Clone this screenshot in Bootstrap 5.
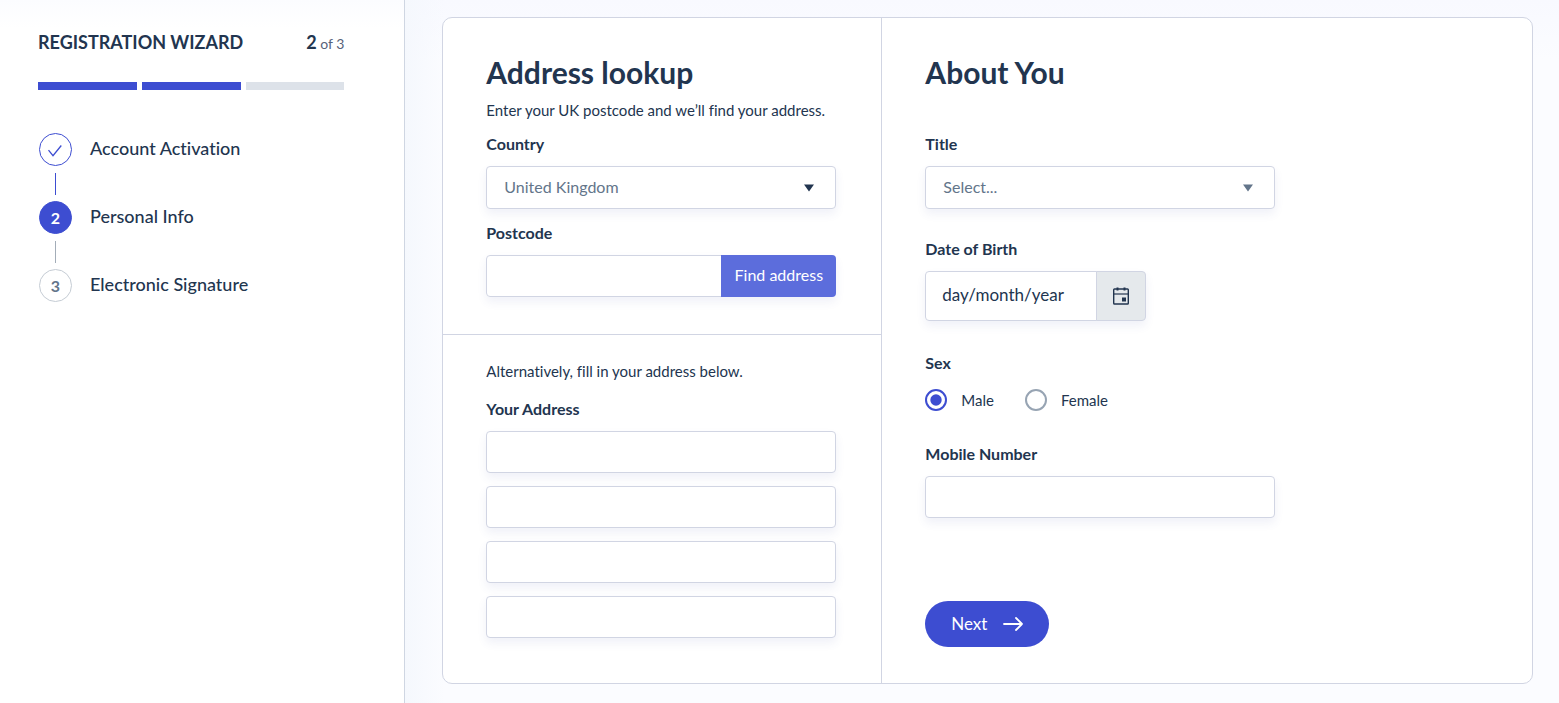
<!DOCTYPE html>
<html lang="en">
<head>
<meta charset="utf-8">
<meta name="viewport" content="width=device-width, initial-scale=1">
<title>Registration Wizard</title>
<link href="https://cdn.jsdelivr.net/npm/bootstrap@5.3.0/dist/css/bootstrap.min.css" rel="stylesheet">
<style>
:root { --ink: #22354f; --muted: #63758a; --brand: #3d4dd1; --line: #d1d5e3; --step-off: #c5ccd4; }
body { font-family: Lato, "Liberation Sans", sans-serif; font-size: 16px; line-height: 24px; color: var(--ink);
  font-variant-ligatures: none; background: #fbfcff; }
.wizard-side { flex: 0 0 26%; padding: 30px 60px 30px 38px; border-right: 1px solid #cfd6e2;
  background: linear-gradient(#fbfcff, #fff 28px); }
.wizard-main { padding: 17px 26px 20px 37px; background: linear-gradient(90deg, #f5f8fd, rgba(251,252,255,0) 40px), linear-gradient(#f8f9ff, #fbfcff 60px); }
.wizard-title { font-size: 18px; line-height: 24px; font-weight: 700; margin: 0; }
.step-count { font-size: 14px; color: #56637a; }
.step-count b { font-size: 18px; color: var(--ink); }
.step-bars { gap: 5px; margin-top: 28px; }
.step-bars span { height: 8px; background: #dde2e9; }
.step-bars .filled { background: var(--brand); }
.step-head, .step-count { height: 24px; }
.steps { margin: 43px 0 0 1px; font-size: 18px; font-weight: 500; }
.steps li { display: grid; grid-template-columns: 33px 1fr; column-gap: 18px; align-items: center; }
.steps a { color: inherit; text-decoration: none; padding-bottom: 4px; }
.step-dot { width: 33px; height: 33px; border: 1px solid var(--step-off); border-radius: 50%; font-size: 16px; font-weight: 700; color: var(--muted); }
.done .step-dot { border-color: var(--brand); color: var(--brand); }
.current .step-dot { border-color: var(--brand); background: var(--brand); color: #fff; }
.steps li + li::before { content: ""; grid-column: 1 / -1; width: 1px; height: 22px; margin: 7px 16px 6px; background: #a3adb8; }
.steps .done + li::before { background: var(--brand); }
.form-panel { border: 1px solid var(--line); border-radius: 10px; background: #fff; }
.address-side { border-right: 1px solid var(--line); }
.lookup { padding: 36px 45px 37px 43px; border-bottom: 1px solid var(--line); }
.manual { padding: 24px 45px 44px 43px; }
.about { padding: 36px 43px; }
.field-col { width: 350px; max-width: 100%; }
.intro { font-size: 15px; margin: 8px 0 10px; }
.manual .intro { margin: 0 0 14px; }
h2 { font-size: 30px; line-height: 36px; font-weight: 700; margin: 0; }
.form-label { font-size: 16px; line-height: 24px; font-weight: 700; margin: 0 0 10px; display: block; }
.postcode-field { margin-top: 12px; }
.about h2 { margin-bottom: 42px; }
.dob-field { margin-top: 28px; }
.sex-field, .mobile-field { margin-top: 30px; }
.address-lines { gap: 13px; }
.form-control, .form-select { height: 42px; border: 1px solid var(--line); border-radius: 4px; font-size: 16px; color: var(--ink);
  padding: 0 16px; box-shadow: 0 5px 10px rgba(60,75,160,.08); }
.form-select { height: 43px; color: var(--muted); padding: 0 40px 2px 17px;
  background-image: url("data:image/svg+xml,%3Csvg xmlns='http://www.w3.org/2000/svg' viewBox='0 0 10 8'%3E%3Cpath fill='%2363758a' d='M0 .5h10L5 7.5z'/%3E%3C/svg%3E");
  background-size: 10px 8px; background-position: right 21px center; }
.form-select.chosen { background-image: url("data:image/svg+xml,%3Csvg xmlns='http://www.w3.org/2000/svg' viewBox='0 0 10 8'%3E%3Cpath fill='%2322354f' d='M0 .5h10L5 7.5z'/%3E%3C/svg%3E"); }
.input-group { box-shadow: 0 5px 10px rgba(60,75,160,.08); border-radius: 4px; }
.input-group .form-control { box-shadow: none; }
.btn-find { width: 115px; padding: 0 0 2px; border: 0; border-radius: 4px; background: #5c6ddc; color: #fff; }
.btn-find:hover { background: var(--brand); color: #fff; }
.dob { width: 221px; }
.dob .form-control { height: 50px; padding-bottom: 4px; font-size: 17px; }
.dob .form-control::placeholder { color: var(--ink); opacity: 1; }
.btn-date { width: 50px; padding: 0; border: 1px solid var(--line); border-radius: 4px; background: #e5e9ec; color: var(--ink); }
.sex-options { gap: 31px; padding-top: 3px; font-size: 15px; }
.sex-choice { gap: 14px; }
.form-check-input { width: 22px; height: 22px; margin: 0; border: 2px solid #97a4b3; float: none; }
.form-check-input:checked { background-color: #fff; border-color: var(--brand);
  background-image: url("data:image/svg+xml,%3Csvg xmlns='http://www.w3.org/2000/svg' viewBox='0 0 18 18'%3E%3Ccircle cx='9' cy='9' r='5.7' fill='%233d4dd1'/%3E%3C/svg%3E"); }
.btn-next { width: 124px; height: 46px; margin-top: 83px; padding: 0; gap: 16px; border: 0; border-radius: 23px; background: var(--brand); color: #fff; font-size: 17px; }
.btn-next:hover { background: #5c6ddc; color: #fff; }
@media (max-width: 1199px) { .wizard-side { flex-basis: auto; } }
</style>
</head>
<body>
<div class="d-xl-flex min-vh-100">
  <aside class="wizard-side">
    <div class="step-head d-flex justify-content-between">
      <h1 class="wizard-title">REGISTRATION WIZARD</h1>
      <div class="step-count"><b>2</b> of 3</div>
    </div>
    <div class="step-bars d-flex"><span class="flex-fill filled"></span><span class="flex-fill filled"></span><span class="flex-fill"></span></div>
    <ol class="steps list-unstyled">
      <li class="done">
        <span class="step-dot d-flex align-items-center justify-content-center"><svg width="16" height="14" viewBox="0 0 16 14" fill="none" stroke="currentColor" stroke-width="1.3" aria-label="Done"><path d="M.5 7.2 5 12.7 13.300 2.500"/></svg></span>
        <a href="#activation">Account Activation</a>
      </li>
      <li class="current">
        <span class="step-dot d-flex align-items-center justify-content-center">2</span>
        <a href="#personal" aria-current="step">Personal Info</a>
      </li>
      <li>
        <span class="step-dot d-flex align-items-center justify-content-center">3</span>
        <a href="#signature">Electronic Signature</a>
      </li>
    </ol>
  </aside>

  <main class="wizard-main flex-grow-1">
    <form class="form-panel d-lg-flex">
      <div class="address-side">
        <section class="lookup">
          <div class="field-col">
            <h2>Address lookup</h2>
            <p class="intro">Enter your UK postcode and we’ll find your address.</p>
            <label class="form-label" for="country">Country</label>
            <select class="form-select chosen" id="country"><option>United Kingdom</option></select>
            <div class="postcode-field">
              <label class="form-label" for="postcode">Postcode</label>
              <div class="input-group">
                <input class="form-control" type="text" id="postcode">
                <button class="btn btn-find" type="button">Find address</button>
              </div>
            </div>
          </div>
        </section>
        <section class="manual">
          <div class="field-col">
            <p class="intro">Alternatively, fill in your address below.</p>
            <label class="form-label" for="line1">Your Address</label>
            <div class="address-lines d-grid">
              <input class="form-control" type="text" id="line1">
              <input class="form-control" type="text" aria-label="Address line 2">
              <input class="form-control" type="text" aria-label="Address line 3">
              <input class="form-control" type="text" aria-label="Address line 4">
            </div>
          </div>
        </section>
      </div>

      <section class="about flex-grow-1">
        <div class="field-col">
          <h2>About You</h2>
          <label class="form-label" for="title">Title</label>
          <select class="form-select" id="title"><option>Select...</option></select>
          <div class="dob-field">
            <label class="form-label" for="dob">Date of Birth</label>
            <div class="input-group dob">
              <input class="form-control" type="text" id="dob" placeholder="day/month/year">
              <button class="btn btn-date d-flex align-items-center justify-content-center" type="button" aria-label="Open calendar">
                <svg width="16" height="18" viewBox="0 0 16 18" fill="none" stroke="currentColor"><rect x=".7" y="2" width="14.600" height="15" rx=".8" stroke-width="1.4"/><path d="M.6 7h14.800" stroke-width="1.2"/><path d="M4.500 .5v3M11.500 .5v3" stroke-width="2"/><path d="M9 10.500h4v4H9z" fill="currentColor" stroke="none"/></svg>
              </button>
            </div>
          </div>
          <fieldset class="sex-field">
            <legend class="form-label">Sex</legend>
            <div class="sex-options d-flex">
              <div class="sex-choice d-flex align-items-center">
                <input class="form-check-input" type="radio" name="sex" id="male" checked><label for="male">Male</label>
              </div>
              <div class="sex-choice d-flex align-items-center">
                <input class="form-check-input" type="radio" name="sex" id="female"><label for="female">Female</label>
              </div>
            </div>
          </fieldset>
          <div class="mobile-field">
            <label class="form-label" for="mobile">Mobile Number</label>
            <input class="form-control" type="tel" id="mobile">
          </div>
          <button class="btn btn-next d-flex align-items-center justify-content-center" type="submit">Next
            <svg width="20" height="16" viewBox="0 0 20 16" fill="none" stroke="currentColor" stroke-width="1.8" stroke-linecap="round" stroke-linejoin="round"><path d="M1 8h18M13 2l6 6-6 6"/></svg>
          </button>
        </div>
      </section>
    </form>
  </main>
</div>
<script src="https://cdn.jsdelivr.net/npm/bootstrap@5.3.0/dist/js/bootstrap.bundle.min.js"></script>
</body>
</html>
